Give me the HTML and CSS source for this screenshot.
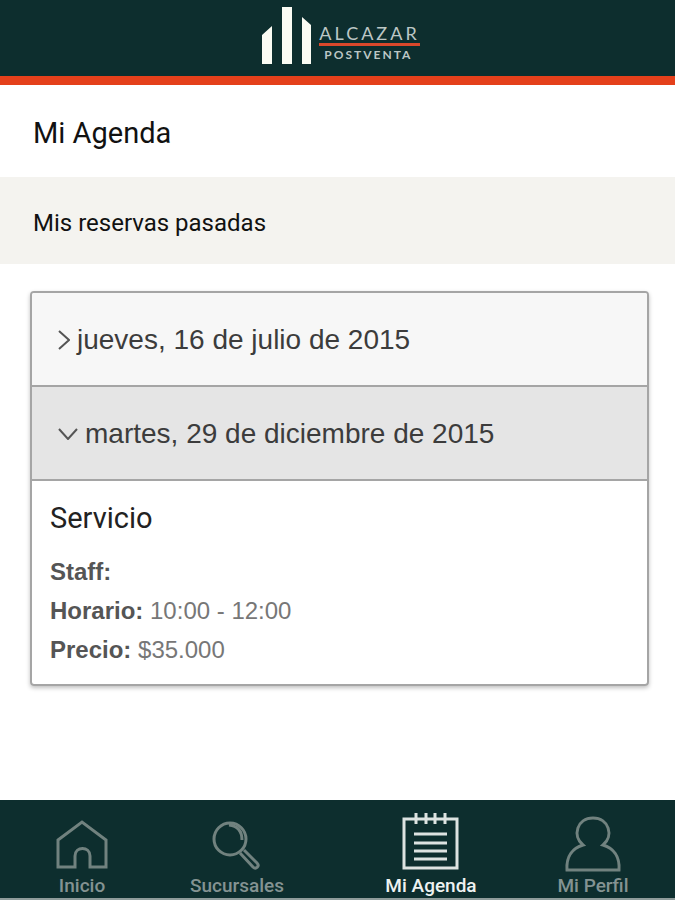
FILE: index.html
```
<!DOCTYPE html>
<html lang="es">
<head>
  <meta charset="utf-8">
  <meta name="viewport" content="width=device-width, initial-scale=1">
  <title>Mi Agenda</title>
  <link rel="stylesheet" href="styles.css">
</head>
<body>
  <header class="header">
    <svg class="logo-bars" viewBox="0 0 52 58" aria-hidden="true">
      <path d="M1 28 L11 19 V57 H1 Z M21 0 H31 V57 H21 Z M41 10 L50 18 V57 H41 Z"/>
    </svg>
    <div class="logo-text">
      <span class="logo-name">ALCAZAR</span>
      <span class="logo-sub">POSTVENTA</span>
    </div>
  </header>

  <main class="main">
    <h1 class="title">Mi Agenda</h1>
    <h2 class="subtitle">Mis reservas pasadas</h2>

    <div class="card">
      <button class="day" type="button" aria-expanded="false">
        <svg class="arrow arrow-right" viewBox="0 0 12 20" aria-hidden="true"><path d="M1 1 L11 10 L1 19"/></svg>
        jueves, 16 de julio de 2015
      </button>
      <button class="day day-open" type="button" aria-expanded="true">
        <svg class="arrow arrow-down" viewBox="0 0 20 12" aria-hidden="true"><path d="M1 1 L10 11 L19 1"/></svg>
        martes, 29 de diciembre de 2015
      </button>
      <div class="detail">
        <h3 class="service">Servicio</h3>
        <p><b>Staff:</b></p>
        <p><b>Horario:</b> 10:00 - 12:00</p>
        <p><b>Precio:</b> $35.000</p>
      </div>
    </div>
  </main>

  <nav class="tabs">
    <a class="tab" href="#inicio">
      <svg class="icon" viewBox="0 0 60 60" aria-hidden="true">
        <path d="M6 28 L30 10 L54 28 V55 H38 V44 C38 34 23 34 23 44 V55 H6 Z"/>
      </svg>
      Inicio
    </a>
    <a class="tab" href="#sucursales">
      <svg class="icon" viewBox="0 0 60 60" aria-hidden="true">
        <circle cx="23" cy="27" r="16"/>
        <path d="M22 13 C31 14 35 20 35 28"/>
        <path d="M33 41 L46 55 C49 58 53 54 50 51 L37 38"/>
      </svg>
      Sucursales
    </a>
    <a class="tab tab-active" href="#agenda">
      <svg class="icon" viewBox="0 0 60 60" aria-hidden="true">
        <path d="M3 7 H56 V56 H3 Z M15 1 V12 M25 1 V12 M34 1 V12 M44 1 V12"/>
        <path d="M13 22 H46 M13 31 H46 M13 39 H46 M13 47 H46"/>
      </svg>
      Mi Agenda
    </a>
    <a class="tab" href="#perfil">
      <svg class="icon" viewBox="0 0 60 60" aria-hidden="true">
        <path d="M20 33 C9 24 14 6 30 6 C46 6 51 24 40 33 C50 36 57 44 56 58 H4 C3 44 10 36 20 33 Z"/>
      </svg>
      Mi Perfil
    </a>
  </nav>
</body>
</html>
```
FILE: styles.css
```
* {
  box-sizing: border-box;
}

body {
  margin: 0;
  min-height: 100vh;
  display: flex;
  flex-direction: column;
  background-color: #fff;
  font-family: Roboto, sans-serif;
  color: #111;
}

h1, h2, h3, p {
  margin: 0;
  font-weight: 400;
}

.header {
  display: flex;
  justify-content: center;
  gap: 6px;
  height: 85px;
  padding: 7px 0 0 6px;
  background-color: #0d2e2e;
  border-bottom: 9px solid #e4401b;
}

.logo-bars {
  width: 52px;
  height: 58px;
  fill: #fbfcf4;
}

.logo-text {
  display: flex;
  flex-direction: column;
  padding-top: 16px;
  color: #bcc7c5;
  font-family: Lato, sans-serif;
}

.logo-name {
  border-bottom: 3px solid #d9482b;
  font-size: 18px;
  line-height: 20px;
  letter-spacing: 3px;
}

.logo-sub {
  padding-left: 5px;
  font-size: 12px;
  font-weight: 700;
  line-height: 18px;
  letter-spacing: 2px;
}

.main {
  flex: 1;
}

.title {
  padding: 28px 33px 24px;
  font-size: 29px;
  line-height: 40px;
}

.subtitle {
  padding: 28px 33px 23px;
  background-color: #f4f3ef;
  font-size: 24px;
  line-height: 36px;
}

.card {
  margin: 27px 26px 27px 30px;
  border: 2px solid #a5a5a5;
  border-radius: 4px;
  box-shadow: 0 2px 4px rgba(0, 0, 0, 0.25);
  overflow: hidden;
  font-family: "Liberation Sans", sans-serif;
}

.day {
  display: flex;
  align-items: center;
  gap: 7px;
  width: 100%;
  height: 94px;
  padding: 2px 26px 0;
  border: 0;
  border-bottom: 2px solid #a5a5a5;
  background-color: #f7f7f7;
  color: #3c3c3c;
  font: inherit;
  font-size: 28px;
  text-align: left;
  cursor: pointer;
}

.day-open {
  background-color: #e5e5e5;
}

.arrow {
  fill: none;
  stroke: #555;
  stroke-width: 2;
}

.arrow-right {
  width: 12px;
  height: 20px;
}

.arrow-down {
  width: 20px;
  height: 12px;
}

.detail {
  padding: 17px 18px 15px;
  color: #777;
  font-size: 24px;
  line-height: 39px;
}

.detail b {
  color: #555;
}

.service {
  margin-bottom: 14px;
  color: #222;
  font-family: Roboto, sans-serif;
  font-size: 29px;
  line-height: 40px;
}

.tabs {
  display: grid;
  grid-template-columns: 164fr 146fr 242fr 82fr 41fr;
  height: 100px;
  padding-top: 12px;
  background-color: #0d2e2e;
  border-bottom: 2px solid #8f9c9b;
}

.tab {
  display: flex;
  flex-direction: column;
  align-items: center;
  color: #849392;
  font-size: 19px;
  font-weight: 500;
  line-height: 28px;
  text-decoration: none;
  white-space: nowrap;
}

.tab-active {
  color: #eef2f1;
}

.icon {
  width: 60px;
  height: 60px;
  fill: none;
  stroke: #71827f;
  stroke-width: 3;
}

.tab-active .icon {
  stroke: #dde3e1;
}
```
